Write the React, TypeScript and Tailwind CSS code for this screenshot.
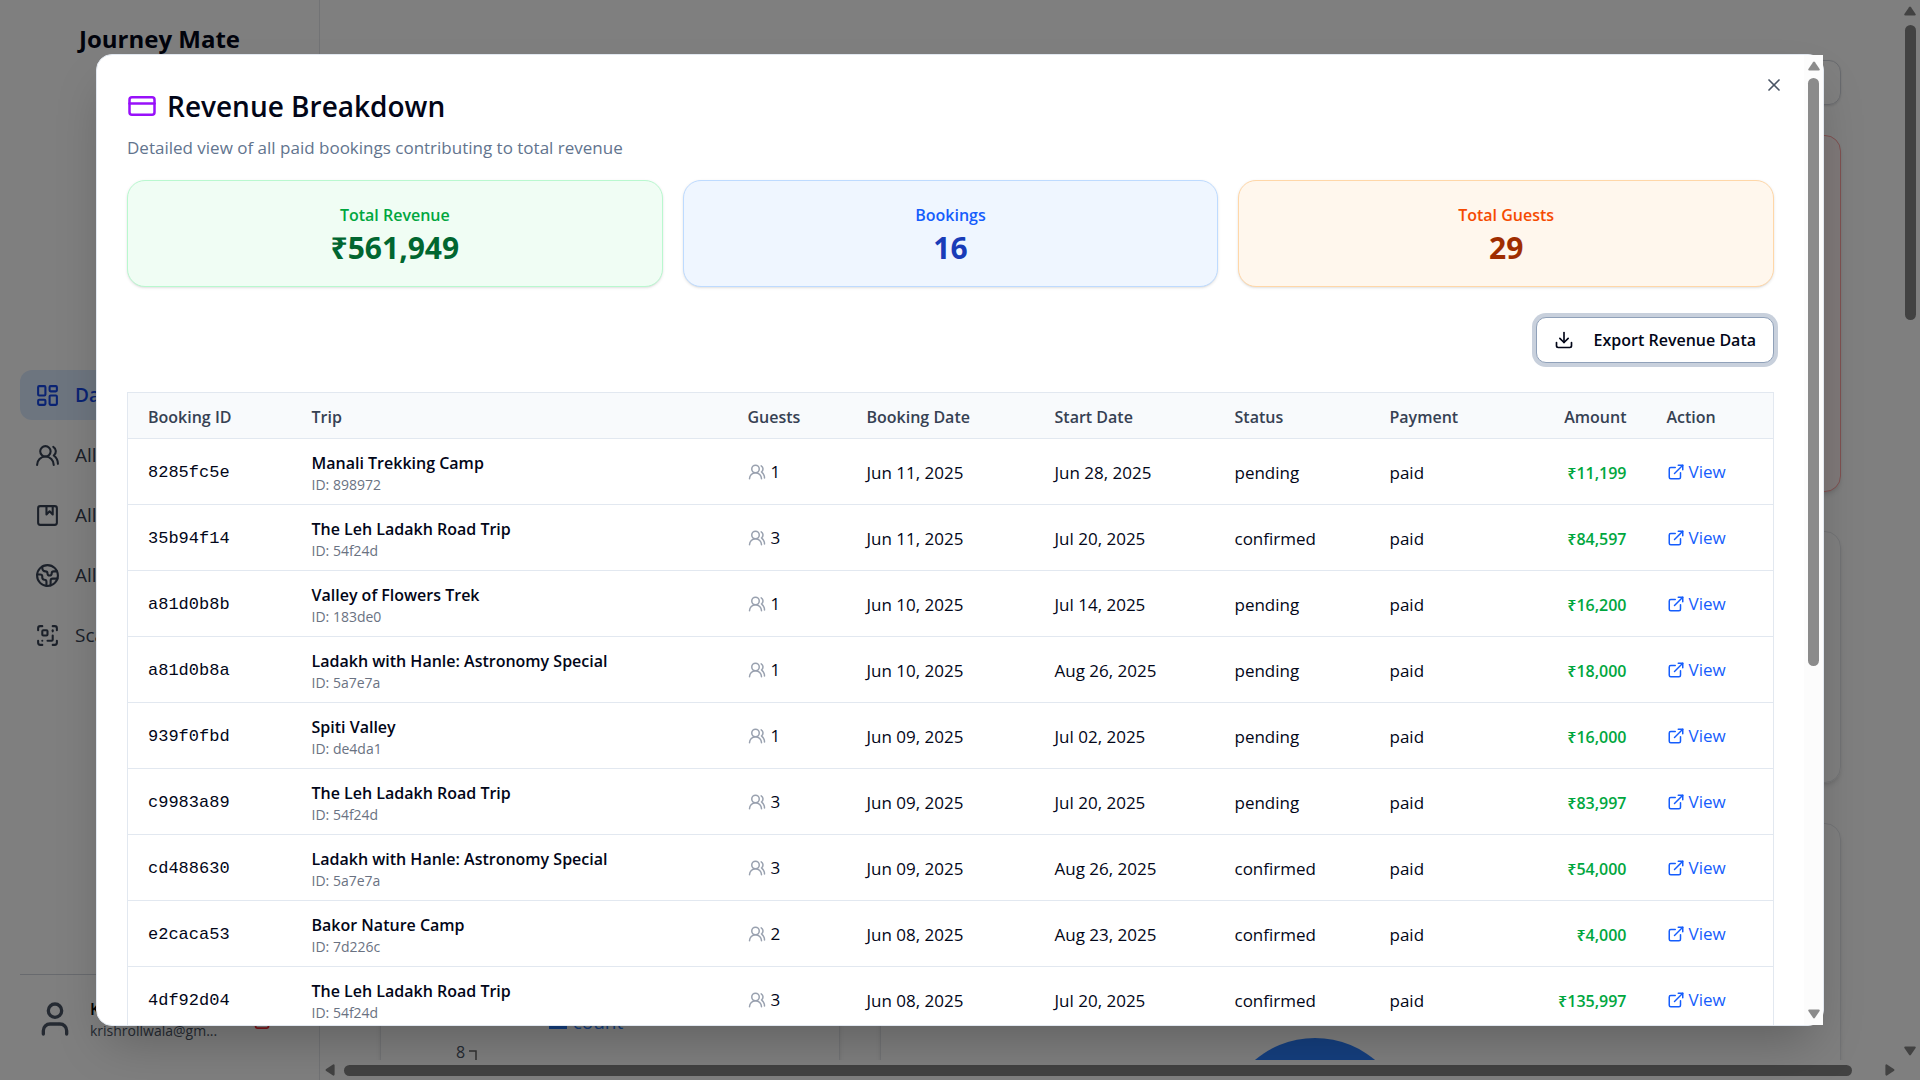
import React from "react";
import {
  Album,
  CreditCard,
  Download,
  Earth,
  ExternalLink,
  LayoutDashboard,
  ScanQrCode,
  Trash2,
  User,
  UsersRound,
  X,
} from "lucide-react";

type Booking = {
  id: string;
  trip: string;
  tripId: string;
  guests: number;
  booked: string;
  start: string;
  status: string;
  amount: string;
};

const bookings: Booking[] = [
  { id: "8285fc5e", trip: "Manali Trekking Camp", tripId: "898972", guests: 1, booked: "Jun 11, 2025", start: "Jun 28, 2025", status: "pending", amount: "₹11,199" },
  { id: "35b94f14", trip: "The Leh Ladakh Road Trip", tripId: "54f24d", guests: 3, booked: "Jun 11, 2025", start: "Jul 20, 2025", status: "confirmed", amount: "₹84,597" },
  { id: "a81d0b8b", trip: "Valley of Flowers Trek", tripId: "183de0", guests: 1, booked: "Jun 10, 2025", start: "Jul 14, 2025", status: "pending", amount: "₹16,200" },
  { id: "a81d0b8a", trip: "Ladakh with Hanle: Astronomy Special", tripId: "5a7e7a", guests: 1, booked: "Jun 10, 2025", start: "Aug 26, 2025", status: "pending", amount: "₹18,000" },
  { id: "939f0fbd", trip: "Spiti Valley", tripId: "de4da1", guests: 1, booked: "Jun 09, 2025", start: "Jul 02, 2025", status: "pending", amount: "₹16,000" },
  { id: "c9983a89", trip: "The Leh Ladakh Road Trip", tripId: "54f24d", guests: 3, booked: "Jun 09, 2025", start: "Jul 20, 2025", status: "pending", amount: "₹83,997" },
  { id: "cd488630", trip: "Ladakh with Hanle: Astronomy Special", tripId: "5a7e7a", guests: 3, booked: "Jun 09, 2025", start: "Aug 26, 2025", status: "confirmed", amount: "₹54,000" },
  { id: "e2caca53", trip: "Bakor Nature Camp", tripId: "7d226c", guests: 2, booked: "Jun 08, 2025", start: "Aug 23, 2025", status: "confirmed", amount: "₹4,000" },
  { id: "4df92d04", trip: "The Leh Ladakh Road Trip", tripId: "54f24d", guests: 3, booked: "Jun 08, 2025", start: "Jul 20, 2025", status: "confirmed", amount: "₹135,997" },
];

const navItems = [
  { label: "Dashboard", icon: LayoutDashboard, active: true },
  { label: "All Users", icon: UsersRound, active: false },
  { label: "All Bookings", icon: Album, active: false },
  { label: "All Trips", icon: Earth, active: false },
  { label: "Scan QR", icon: ScanQrCode, active: false },
];

function Arrow({ className }: { className: string }) {
  return (
    <svg viewBox="0 0 12 10" className={className} fill="currentColor" aria-hidden="true">
      <path d="M5 1.2Q6-.2 7 1.2L11.6 8Q12.2 9.4 10.6 9.6H1.4Q-.2 9.4.4 8Z" />
    </svg>
  );
}

function Sidebar() {
  return (
    <aside className="flex w-[320px] shrink-0 flex-col border-r border-gray-200 px-5">
      <p className="pt-[23px] text-center text-[24px]/8 font-bold whitespace-nowrap text-[#020618]">Journey Mate</p>
      <nav className="mt-[315px] flex flex-col gap-[10px]">
        {navItems.map(({ label, icon: Icon, active }) => (
          <a
            key={label}
            href="#"
            className={
              active
                ? "flex h-[50px] items-center gap-[15px] rounded-xl bg-blue-100 px-[15px] text-[19px] font-semibold text-blue-700"
                : "flex h-[50px] items-center gap-[15px] rounded-xl px-[15px] text-[19px] text-gray-700"
            }
          >
            <Icon size={25} />
            {label}
          </a>
        ))}
      </nav>
      <div className="mt-auto flex h-[106px] items-center border-t border-gray-300 pb-[18px]">
        <User className="mr-[15px] ml-[15px] h-[40px] w-10 text-gray-600" strokeWidth={2} />
        <div className="min-w-0 flex-1">
          <p className="text-base/6 font-semibold text-black">Krish</p>
          <p className="truncate text-[14px]/5 text-gray-600">krishrollwala@gm...</p>
        </div>
        <button aria-label="Remove account" className="mr-[26px] text-red-500">
          <Trash2 size={22} />
        </button>
      </div>
    </aside>
  );
}

function Dashboard() {
  return (
    <div className="flex min-w-0 flex-1">
      <main className="flex min-w-0 flex-1 flex-col">
        <div className="flex min-h-0 flex-1 flex-col overflow-hidden pr-[59px] pl-[60px]">
          <div className="mt-[60px] h-[45px] shrink-0 rounded-xl border border-gray-300 shadow-sm" />
          <div className="mt-[30px] h-[357px] shrink-0 rounded-2xl border border-red-300 bg-red-50 shadow-md" />
          <div className="mt-[39px] h-[252px] shrink-0 rounded-2xl border border-gray-200 shadow-md" />
          <div className="mt-10 flex h-[500px] shrink-0 gap-10">
            <div className="flex w-[460px] shrink-0 flex-col rounded-2xl border border-gray-200 pt-[186px] shadow-md">
              <p className="flex items-center justify-center pr-12 text-[19px]/6 text-blue-500">
                <span className="mr-[6px] h-[14px] w-[18px] bg-blue-500" />
                count
              </p>
              <p className="mt-2 flex items-center gap-1 pl-[75px] text-base/4 text-gray-600">
                8
                <svg width="8" height="12" className="mt-2" fill="none" stroke="#666" strokeWidth="1.5" aria-hidden="true">
                  <path d="M0 1H7V12" />
                </svg>
              </p>
            </div>
            <div className="flex flex-1 justify-center rounded-2xl border border-gray-200 pt-[214px] pr-[92px] shadow-md">
              <div className="size-[186px] rounded-full bg-blue-500" />
            </div>
          </div>
        </div>
        <div className="flex h-5 shrink-0 items-center gap-2 pl-1 text-[#858585]">
          <Arrow className="h-[10px] w-3 -rotate-90" />
          <div className="h-[11px] flex-1 rounded-full bg-[#858585]" />
          <Arrow className="mr-1 ml-6 h-[10px] w-3 rotate-90" />
        </div>
      </main>
      <div className="flex w-5 shrink-0 flex-col items-center pt-[6px] pb-6 text-[#858585]">
        <Arrow className="h-[10px] w-3" />
        <div className="mt-[9px] h-[295px] w-[11px] rounded-full bg-[#858585]" />
        <Arrow className="mt-auto h-[10px] w-3 rotate-180" />
      </div>
    </div>
  );
}

function StatCard({ label, value, box, labelColor, valueColor }: { label: string; value: string; box: string; labelColor: string; valueColor: string }) {
  return (
    <section className={`flex flex-1 flex-col items-center rounded-[18px] border pt-5 pb-5 shadow-sm ${box}`}>
      <h3 className={`text-[16px]/7 font-semibold ${labelColor}`}>{label}</h3>
      <p className={`text-[30px]/[37px] font-bold ${valueColor}`}>{value}</p>
    </section>
  );
}

function BookingsTable() {
  return (
    <table className="mt-[29px] w-full table-fixed border border-slate-200 text-left text-[17px]">
      <colgroup>
        <col className="w-[164px]" />
        <col />
        <col className="w-[119px]" />
        <col className="w-[188px]" />
        <col className="w-[180px]" />
        <col className="w-[155px]" />
        <col className="w-[129px]" />
        <col className="w-[148px]" />
        <col className="w-[127px]" />
      </colgroup>
      <thead className="bg-slate-50 text-[16px] text-gray-700">
        <tr className="h-[46px] border-b border-slate-200">
          <th className="px-5 pt-[2px] font-semibold">Booking ID</th>
          <th className="px-5 pt-[2px] font-semibold">Trip</th>
          <th className="px-5 pt-[2px] font-semibold">Guests</th>
          <th className="px-5 pt-[2px] font-semibold">Booking Date</th>
          <th className="px-5 pt-[2px] font-semibold">Start Date</th>
          <th className="px-5 pt-[2px] font-semibold">Status</th>
          <th className="px-5 pt-[2px] font-semibold">Payment</th>
          <th className="px-5 pt-[2px] text-right font-semibold">Amount</th>
          <th className="px-5 pt-[2px] font-semibold">Action</th>
        </tr>
      </thead>
      <tbody>
        {bookings.map((b) => (
          <tr key={b.id} className="h-[66px] border-b border-slate-200">
            <td className="px-5 pt-[2px] font-['Liberation_Mono',monospace]">{b.id}</td>
            <td className="px-5 pt-[2px]">
              <div className="text-[16px]/6 font-semibold">{b.trip}</div>
              <div className="text-[14px]/5 text-gray-500">ID: {b.tripId}</div>
            </td>
            <td className="px-5">
              <span className="flex items-center gap-[5px]">
                <UsersRound className="text-gray-400" size={18} />
                {b.guests}
              </span>
            </td>
            <td className="px-5 pt-[2px]">{b.booked}</td>
            <td className="px-5 pt-[2px]">{b.start}</td>
            <td className="px-5 pt-[2px]">{b.status}</td>
            <td className="px-5 pt-[2px]">paid</td>
            <td className="px-5 pt-[2px] text-right text-[16px] font-semibold text-green-600">{b.amount}</td>
            <td className="px-5">
              <a href="#" className="flex items-center gap-1 text-blue-600">
                <ExternalLink size={18} />
                View
              </a>
            </td>
          </tr>
        ))}
      </tbody>
    </table>
  );
}

function RevenueDialog() {
  return (
    <div
      role="dialog"
      aria-labelledby="revenue-title"
      className="relative flex h-[90vh] w-[90vw] rounded-2xl border border-slate-200 bg-white text-[#020618] shadow-2xl"
    >
      <div className="min-w-0 flex-1 overflow-hidden rounded-l-2xl px-[30px] pt-[30px]">
        <header>
          <h2 id="revenue-title" className="flex items-center gap-[10px] text-[28px]/[42px] font-semibold">
            <CreditCard className="text-purple-600" size={30} />
            Revenue Breakdown
          </h2>
          <p className="mt-[9px] text-[17px]/6 text-slate-500">Detailed view of all paid bookings contributing to total revenue</p>
        </header>
        <div className="mt-5 flex gap-5">
          <StatCard label="Total Revenue" value="₹561,949" box="border-green-200 bg-green-50" labelColor="text-green-600" valueColor="text-green-800" />
          <StatCard label="Bookings" value="16" box="border-blue-200 bg-blue-50" labelColor="text-blue-600" valueColor="text-blue-800" />
          <StatCard label="Total Guests" value="29" box="border-orange-200 bg-orange-50" labelColor="text-orange-600" valueColor="text-orange-800" />
        </div>
        <div className="mt-[30px] flex justify-end">
          <button className="flex h-[46px] items-center gap-5 rounded-[10px] border border-slate-400 bg-white px-[17px] text-[16px] font-semibold ring-4 ring-[#c8d0dc]">
            <Download size={20} />
            Export Revenue Data
          </button>
        </div>
        <BookingsTable />
      </div>
      <div className="flex w-[19px] shrink-0 flex-col items-center bg-[#fcfcfc] pt-[6px] pb-[6px] text-[#8b8b8b]">
        <Arrow className="h-[10px] w-3" />
        <div className="mt-[7px] h-[588px] w-[11px] rounded-full bg-[#8b8b8b]" />
        <Arrow className="mt-auto h-[10px] w-3 rotate-180" />
      </div>
      <button aria-label="Close" className="absolute top-5 right-[39px] text-gray-600">
        <X size={20} />
      </button>
    </div>
  );
}

export default function App() {
  return (
    <div className="relative h-screen overflow-hidden bg-white font-['Open_Sans','Noto_Sans',sans-serif]">
      <div className="flex h-full">
        <Sidebar />
        <Dashboard />
      </div>
      <div className="absolute inset-0 flex items-center justify-center bg-black/50">
        <RevenueDialog />
      </div>
    </div>
  );
}
